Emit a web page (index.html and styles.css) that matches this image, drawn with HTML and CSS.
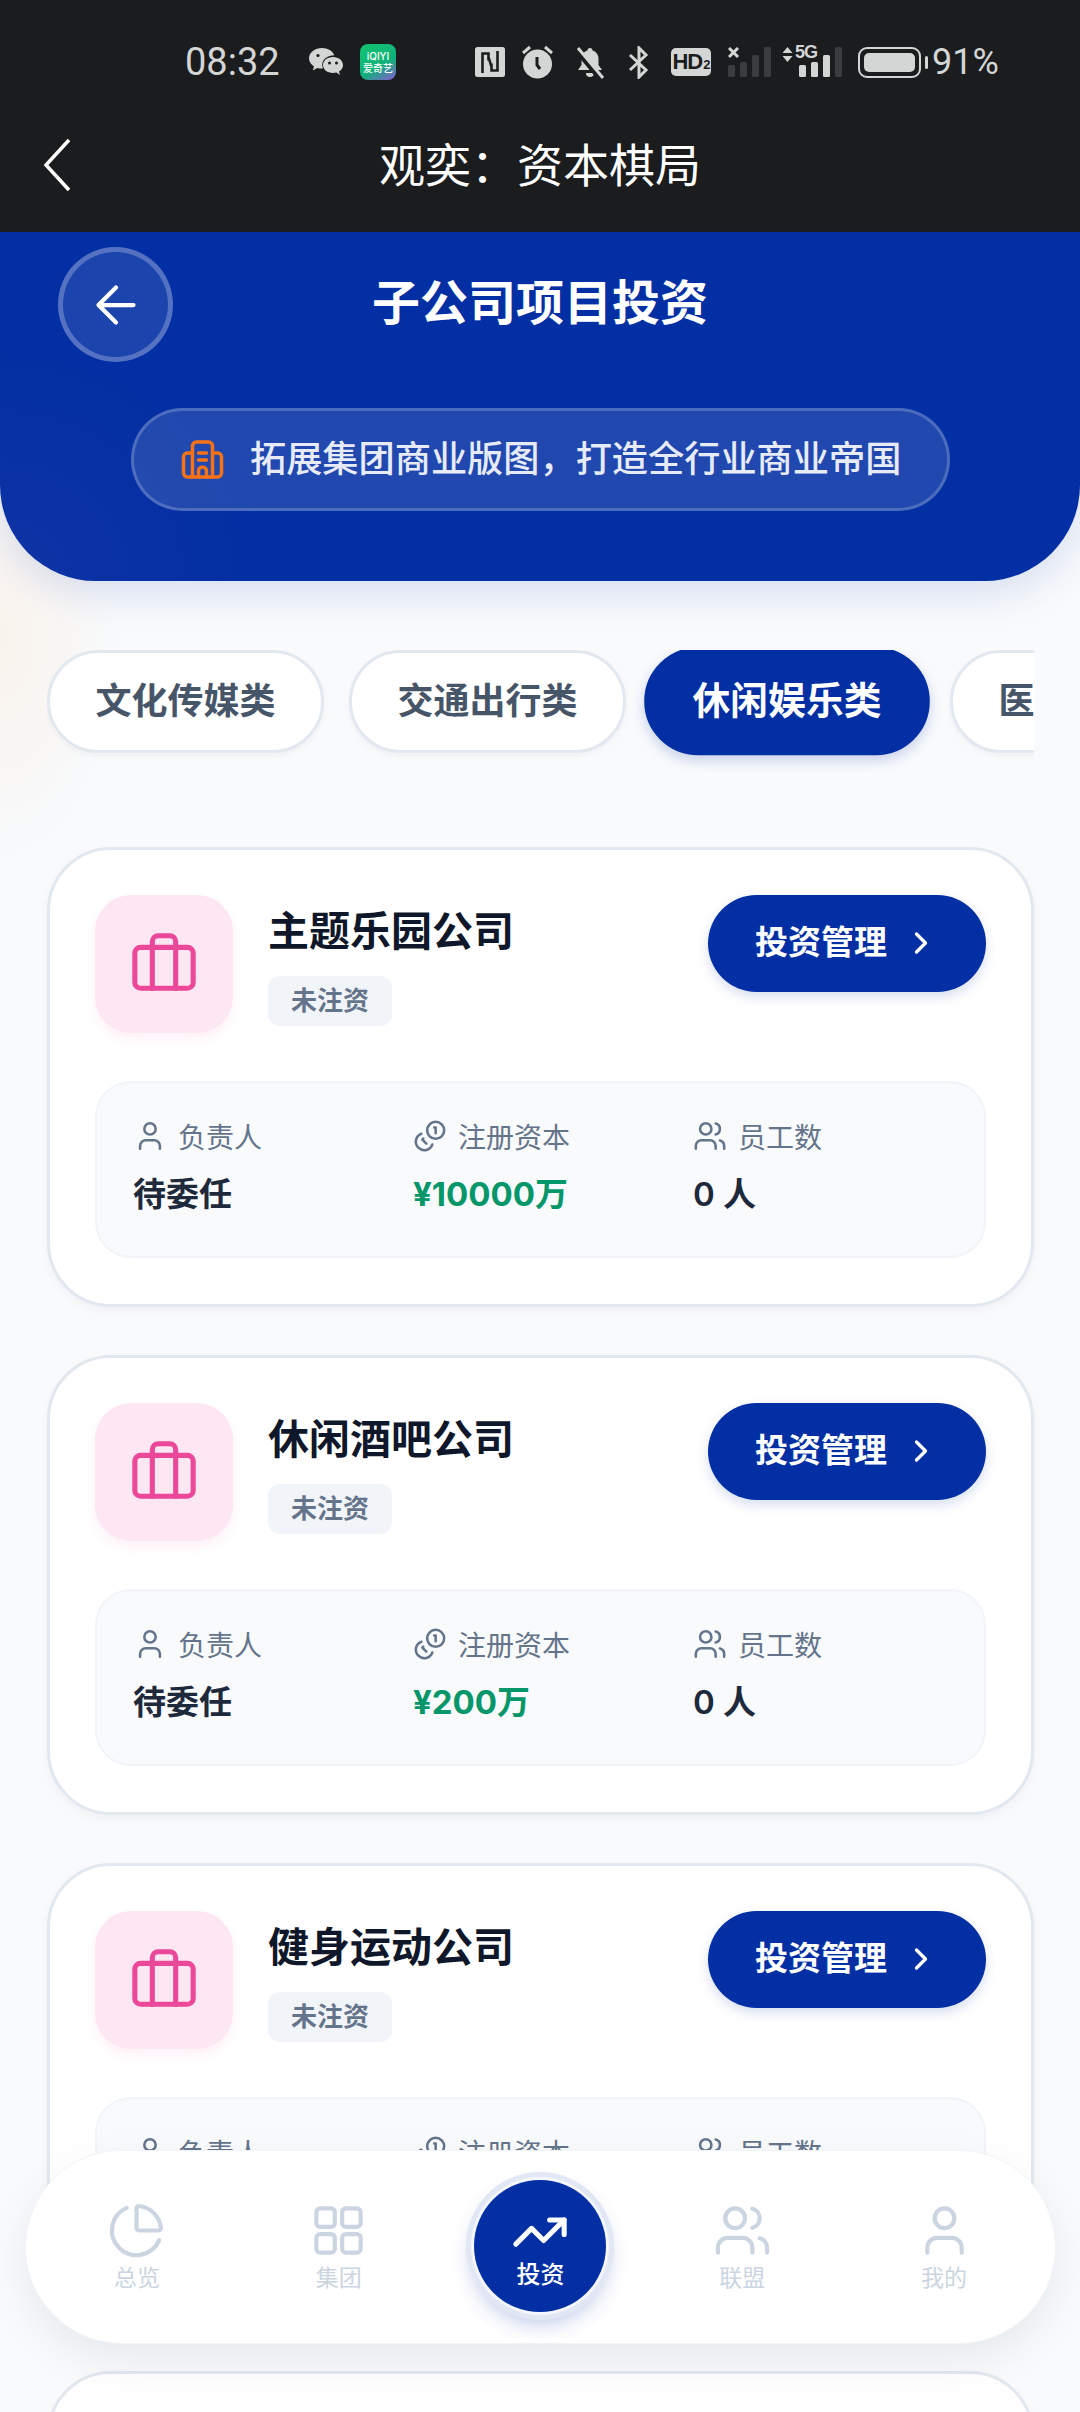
FILE: index.html
```html
<!doctype html>
<html lang="zh-CN">

<head>
    <meta charset="UTF-8">
    <meta name="viewport" content="width=device-width, initial-scale=1.0">
    <link rel="stylesheet" href="styles.css">
    <title>观奕：资本棋局</title>
</head>

<body>
    <div class="phone">
        <div class="system-bar">
            <div class="status-row">
                <span class="clock">08:32</span>
                <svg class="ic-wechat" viewBox="0 0 34 28"><path d="M13 0C6 0 0 4.600 0 10.300c0 3.400 2 6.300 5 8.100l-1.200 4 4.600-2.500c1.400.4 2.900.6 4.600.6l1 0c-.5-1.200-.8-2.400-.8-3.600C13.200 11.500 18.400 7.400 25.300 7.300 23.600 3 18.800 0 13 0z"/><path d="M24 9c-5.600 0-10 3.600-10 8s4.400 8 10 8c1.100 0 2.200-.2 3.300-.5L31 27l-1-3.500c2.500-1.500 4-3.800 4-6.500 0-4.400-4.400-8-10-8z"/><circle cx="9" cy="7.500" r="1.600" fill="#1b1c1e"/><circle cx="20.500" cy="15" r="1.500" fill="#1b1c1e"/><circle cx="27.500" cy="15" r="1.500" fill="#1b1c1e"/></svg>
                <span class="iqiyi"><span>iQIYI</span><span>爱奇艺</span></span>
                <svg class="ic-nfc" viewBox="0 0 30 30"><rect width="30" height="30" rx="2.500"/><path d="M7.500 26V6.500h6v7M22.500 4v19.500h-6v-7M13.500 10l3 10" fill="none" stroke="#1b1c1e" stroke-width="2.600"/></svg>
                <svg class="ic-alarm" viewBox="0 0 31 34"><circle cx="15.500" cy="19" r="14.500"/><path d="M15 12v8l3 4" fill="none" stroke="#1b1c1e" stroke-width="3"/><path d="M1 8l7-6M30 8l-7-6" fill="none" stroke="#d4d5d5" stroke-width="3"/></svg>
                <svg class="ic-bell" viewBox="0 0 30 34"><path d="M15 3a2.500 2.500 0 0 0-2.500 2.500C8.500 6.800 6.500 10 6.500 14v6L3 25h24l-3.500-5v-6c0-4-2-7.200-6-8.500A2.500 2.500 0 0 0 15 3z"/><path d="M11 28h8a4 4 0 0 1-8 0z"/><path d="M1 4l25 30" fill="none" stroke="#1b1c1e" stroke-width="6"/><path d="M3 3l25 30" fill="none" stroke="#d4d5d5" stroke-width="3"/></svg>
                <svg class="ic-bt" viewBox="0 0 22 33"><path d="M2 9l16 15-7 7V2l7 7L2 24" fill="none" stroke="#d4d5d5" stroke-width="3"/></svg>
                <span class="hd">HD<small>2</small></span>
                <svg class="ic-signal" viewBox="0 0 43 30"><path d="M1 1l9 9M10 1l-9 9" fill="none" stroke="#d4d5d5" stroke-width="3"/><rect x="0" y="18" width="7" height="12" rx="1.500" fill="#3b3c3e"/><rect x="12" y="15" width="7" height="15" rx="1.500" fill="#3b3c3e"/><rect x="24" y="8" width="7" height="22" rx="1.500" fill="#3b3c3e"/><rect x="36" y="0" width="7" height="30" rx="1.500" fill="#3b3c3e"/></svg>
                <div class="net">
                    <svg class="ic-updown" viewBox="0 0 11 15"><path d="M5.500 0l5 6H.5zM5.500 15l5-6H.5z"/></svg>
                    <span class="net-5g">5G</span>
                    <svg class="ic-bars" viewBox="0 0 43 30"><rect x="0" y="18" width="7" height="12" rx="1.500" fill="#d4d5d5"/><rect x="12" y="15" width="7" height="15" rx="1.500" fill="#d4d5d5"/><rect x="24" y="8" width="7" height="22" rx="1.500" fill="#d4d5d5"/><rect x="36" y="0" width="7" height="30" rx="1.500" fill="#3b3c3e"/></svg>
                </div>
                <div class="battery"><span class="battery-fill"></span></div>
                <span class="percent">91%</span>
            </div>
            <div class="title-row">
                <svg class="ic-sysback" viewBox="0 0 28 54"><path d="M26 2L3 27l23 25" fill="none" stroke="#fff" stroke-width="3.500"/></svg>
                <span class="app-title">观奕：资本棋局</span>
            </div>
        </div>

        <header class="hero">
            <div class="hero-top">
                <div class="back-btn">
                    <svg viewBox="0 0 24 24"><path d="M12 19l-7-7 7-7M19 12H5"/></svg>
                </div>
                <h1>子公司项目投资</h1>
            </div>
            <div class="slogan">
                <svg viewBox="0 0 42 39"><path d="M11 37V6a4 4 0 0 1 4-4h12a4 4 0 0 1 4 4v31"/><path d="M11 13H6a4 4 0 0 0-4 4v16a4 4 0 0 0 4 4h30a4 4 0 0 0 4-4V17a4 4 0 0 0-4-4h-5"/><path d="M17 13h8M17 20h8M17 37v-6a4 4 0 0 1 8 0v6"/></svg>
                <span>拓展集团商业版图，打造全行业商业帝国</span>
            </div>
        </header>

        <div class="tabs">
            <div class="tab">文化传媒类</div>
            <div class="tab">交通出行类</div>
            <div class="tab active">休闲娱乐类</div>
            <div class="tab">医疗健康类</div>
        </div>

        <div class="cards">
            <div class="card">
                <div class="card-top">
                    <div class="biz-icon"><svg viewBox="0 0 24 24"><rect x="2" y="7" width="20" height="14" rx="2"/><path d="M16 21V5a2 2 0 0 0-2-2h-4a2 2 0 0 0-2 2v16"/></svg></div>
                    <div class="biz-info">
                        <div class="biz-name">主题乐园公司</div>
                        <span class="biz-tag">未注资</span>
                    </div>
                    <div class="manage-btn">投资管理<svg viewBox="0 0 24 24"><path d="M9 18l6-6-6-6"/></svg></div>
                </div>
                <div class="stats">
                    <div class="stat">
                        <div class="stat-label"><svg viewBox="0 0 24 24"><path d="M19 21v-2a4 4 0 0 0-4-4H9a4 4 0 0 0-4 4v2"/><circle cx="12" cy="7" r="4"/></svg>负责人</div>
                        <div class="stat-value">待委任</div>
                    </div>
                    <div class="stat">
                        <div class="stat-label"><svg viewBox="0 0 24 24"><circle cx="16" cy="8" r="6"/><path d="M5.910 10.370A6 6 0 1 0 13.660 18"/><path d="M15 6h1v4"/><path d="M7.290 13.880l-.7.710 2.820 2.820"/></svg>注册资本</div>
                        <div class="stat-value money">¥10000万</div>
                    </div>
                    <div class="stat">
                        <div class="stat-label"><svg viewBox="0 0 24 24"><path d="M16 21v-2a4 4 0 0 0-4-4H6a4 4 0 0 0-4 4v2"/><circle cx="9" cy="7" r="4"/><path d="M22 21v-2a4 4 0 0 0-3-3.870"/><path d="M16 3.130a4 4 0 0 1 0 7.750"/></svg>员工数</div>
                        <div class="stat-value plain">0 人</div>
                    </div>
                </div>
            </div>

            <div class="card">
                <div class="card-top">
                    <div class="biz-icon"><svg viewBox="0 0 24 24"><rect x="2" y="7" width="20" height="14" rx="2"/><path d="M16 21V5a2 2 0 0 0-2-2h-4a2 2 0 0 0-2 2v16"/></svg></div>
                    <div class="biz-info">
                        <div class="biz-name">休闲酒吧公司</div>
                        <span class="biz-tag">未注资</span>
                    </div>
                    <div class="manage-btn">投资管理<svg viewBox="0 0 24 24"><path d="M9 18l6-6-6-6"/></svg></div>
                </div>
                <div class="stats">
                    <div class="stat">
                        <div class="stat-label"><svg viewBox="0 0 24 24"><path d="M19 21v-2a4 4 0 0 0-4-4H9a4 4 0 0 0-4 4v2"/><circle cx="12" cy="7" r="4"/></svg>负责人</div>
                        <div class="stat-value">待委任</div>
                    </div>
                    <div class="stat">
                        <div class="stat-label"><svg viewBox="0 0 24 24"><circle cx="16" cy="8" r="6"/><path d="M5.910 10.370A6 6 0 1 0 13.660 18"/><path d="M15 6h1v4"/><path d="M7.290 13.880l-.7.710 2.820 2.820"/></svg>注册资本</div>
                        <div class="stat-value money">¥200万</div>
                    </div>
                    <div class="stat">
                        <div class="stat-label"><svg viewBox="0 0 24 24"><path d="M16 21v-2a4 4 0 0 0-4-4H6a4 4 0 0 0-4 4v2"/><circle cx="9" cy="7" r="4"/><path d="M22 21v-2a4 4 0 0 0-3-3.870"/><path d="M16 3.130a4 4 0 0 1 0 7.750"/></svg>员工数</div>
                        <div class="stat-value plain">0 人</div>
                    </div>
                </div>
            </div>

            <div class="card">
                <div class="card-top">
                    <div class="biz-icon"><svg viewBox="0 0 24 24"><rect x="2" y="7" width="20" height="14" rx="2"/><path d="M16 21V5a2 2 0 0 0-2-2h-4a2 2 0 0 0-2 2v16"/></svg></div>
                    <div class="biz-info">
                        <div class="biz-name">健身运动公司</div>
                        <span class="biz-tag">未注资</span>
                    </div>
                    <div class="manage-btn">投资管理<svg viewBox="0 0 24 24"><path d="M9 18l6-6-6-6"/></svg></div>
                </div>
                <div class="stats">
                    <div class="stat">
                        <div class="stat-label"><svg viewBox="0 0 24 24"><path d="M19 21v-2a4 4 0 0 0-4-4H9a4 4 0 0 0-4 4v2"/><circle cx="12" cy="7" r="4"/></svg>负责人</div>
                        <div class="stat-value">待委任</div>
                    </div>
                    <div class="stat">
                        <div class="stat-label"><svg viewBox="0 0 24 24"><circle cx="16" cy="8" r="6"/><path d="M5.910 10.370A6 6 0 1 0 13.660 18"/><path d="M15 6h1v4"/><path d="M7.290 13.880l-.7.710 2.820 2.820"/></svg>注册资本</div>
                        <div class="stat-value money">¥500万</div>
                    </div>
                    <div class="stat">
                        <div class="stat-label"><svg viewBox="0 0 24 24"><path d="M16 21v-2a4 4 0 0 0-4-4H6a4 4 0 0 0-4 4v2"/><circle cx="9" cy="7" r="4"/><path d="M22 21v-2a4 4 0 0 0-3-3.870"/><path d="M16 3.130a4 4 0 0 1 0 7.750"/></svg>员工数</div>
                        <div class="stat-value plain">0 人</div>
                    </div>
                </div>
            </div>

            <div class="card"></div>
        </div>

        <nav class="bottom-nav">
            <div class="nav-item">
                <svg viewBox="0 0 24 24"><path d="M21.210 15.890A10 10 0 1 1 8 2.830"/><path d="M21 12c.552 0 1.005-.449.95-.998a10 10 0 0 0-8.953-8.951c-.55-.055-.998.398-.998.95v8a1 1 0 0 0 1 1z"/></svg>
                <span>总览</span>
            </div>
            <div class="nav-item">
                <svg viewBox="0 0 24 24"><rect x="3" y="3" width="7.500" height="7.500" rx="1.500"/><rect x="13.500" y="3" width="7.500" height="7.500" rx="1.500"/><rect x="3" y="13.500" width="7.500" height="7.500" rx="1.500"/><rect x="13.500" y="13.500" width="7.500" height="7.500" rx="1.500"/></svg>
                <span>集团</span>
            </div>
            <div class="nav-item nav-center">
                <div class="nav-circle">
                    <svg viewBox="0 0 24 24"><path d="M22 7l-8.500 8.500-5-5L2 17"/><path d="M16 7h6v6"/></svg>
                    <span>投资</span>
                </div>
            </div>
            <div class="nav-item">
                <svg viewBox="0 0 24 24"><path d="M16 21v-2a4 4 0 0 0-4-4H6a4 4 0 0 0-4 4v2"/><circle cx="9" cy="7" r="4"/><path d="M22 21v-2a4 4 0 0 0-3-3.870"/><path d="M16 3.130a4 4 0 0 1 0 7.750"/></svg>
                <span>联盟</span>
            </div>
            <div class="nav-item">
                <svg viewBox="0 0 24 24"><path d="M19 21v-2a4 4 0 0 0-4-4H9a4 4 0 0 0-4 4v2"/><circle cx="12" cy="7" r="4"/></svg>
                <span>我的</span>
            </div>
        </nav>
    </div>
</body>

</html>
```

FILE: styles.css
```css
* {
    box-sizing: border-box;
}

body {
    margin: 0;
    font-family: Inter, "Noto Sans CJK SC", sans-serif;
}

.phone {
    position: relative;
    width: 1080px;
    height: 2412px;
    overflow: hidden;
    background:
        radial-gradient(ellipse 120px 220px at 0 640px, rgba(253, 226, 200, 0.3), rgba(253, 226, 200, 0)),
        #f8fafc;
}

/* system bar */
.system-bar {
    height: 232px;
    background: #1b1c1e;
    color: #fff;
}

.status-row {
    display: flex;
    align-items: center;
    height: 124px;
    padding-left: 185px;
    color: #d4d5d5;
    fill: #d4d5d5;
}

.clock {
    font-family: Roboto, sans-serif;
    font-size: 38px;
    width: 93px;
    white-space: nowrap;
}

.ic-wechat {
    width: 34px;
    height: 28px;
    margin-left: 31px;
}

.iqiyi {
    display: flex;
    flex-direction: column;
    align-items: center;
    justify-content: center;
    width: 36px;
    height: 36px;
    margin-left: 17px;
    border-radius: 8px;
    background: linear-gradient(150deg, #12c46f 0%, #10b07a 60%, #8a5ad8 100%);
    color: #fff;
    font-size: 10px;
    line-height: 12px;
    font-weight: 500;
    white-space: nowrap;
}

.ic-nfc {
    width: 30px;
    height: 30px;
    margin-left: 79px;
}

.ic-alarm {
    width: 31px;
    height: 34px;
    margin-left: 17px;
}

.ic-bell {
    width: 30px;
    height: 34px;
    margin-left: 22px;
}

.ic-bt {
    width: 22px;
    height: 33px;
    margin-left: 23px;
}

.hd {
    display: flex;
    align-items: baseline;
    justify-content: center;
    width: 40px;
    height: 28px;
    margin-left: 21px;
    border-radius: 5px;
    background: #d4d5d5;
    color: #1b1c1e;
    font-family: "Liberation Sans", sans-serif;
    font-size: 22px;
    line-height: 28px;
    font-weight: 700;
    letter-spacing: -1px;
}

.hd small {
    font-size: 13px;
    margin-left: 1px;
}

.ic-signal {
    width: 43px;
    height: 30px;
    margin-left: 17px;
}

.net {
    position: relative;
    width: 60px;
    height: 30px;
    margin-left: 11px;
}

.ic-updown {
    position: absolute;
    left: 0;
    top: 0;
    width: 11px;
    height: 15px;
}

.net-5g {
    position: absolute;
    left: 13px;
    top: -4px;
    font-family: "Liberation Sans", sans-serif;
    font-size: 18px;
    line-height: 18px;
    font-weight: 700;
    letter-spacing: -1px;
}

.ic-bars {
    position: absolute;
    left: 17px;
    top: 0;
    width: 43px;
    height: 30px;
}

.battery {
    position: relative;
    width: 63px;
    height: 31px;
    margin-left: 16px;
    padding: 4px;
    border: 2px solid #d4d5d5;
    border-radius: 9px;
}

.battery::after {
    content: "";
    position: absolute;
    right: -9px;
    top: 7px;
    width: 3px;
    height: 13px;
    border-radius: 2px;
    background: #d4d5d5;
}

.battery-fill {
    display: block;
    width: 100%;
    height: 100%;
    border-radius: 5px;
    background: #d4d5d5;
}

.percent {
    margin-left: 11px;
    font-family: Roboto, sans-serif;
    font-size: 36px;
}

.title-row {
    position: relative;
    display: flex;
    align-items: center;
    justify-content: center;
    height: 82px;
    padding-bottom: 6px;
}

.ic-sysback {
    position: absolute;
    left: 43px;
    top: 14px;
    width: 28px;
    height: 54px;
}

.app-title {
    font-family: "Noto Sans CJK SC", sans-serif;
    font-size: 46px;
    font-weight: 400;
    line-height: 60px;
}

/* blue header */
.hero {
    height: 349px;
    padding: 15px 58px 0;
    border-radius: 0 0 96px 96px;
    background:
        radial-gradient(ellipse 260px 240px at 0 100%, rgba(40, 60, 170, 0.35), rgba(40, 60, 170, 0)),
        #022fa3;
    box-shadow: 0 12px 40px rgba(2, 47, 163, 0.14);
    color: #fff;
}

.hero-top {
    position: relative;
    display: flex;
    align-items: center;
    justify-content: center;
    height: 115px;
}

.back-btn {
    position: absolute;
    left: 0;
    top: 0;
    display: flex;
    align-items: center;
    justify-content: center;
    width: 115px;
    height: 115px;
    border-radius: 50%;
    border: 5px solid rgba(255, 255, 255, 0.25);
    background: rgba(255, 255, 255, 0.1);
}

.back-btn svg {
    width: 60px;
    height: 60px;
    fill: none;
    stroke: #fff;
    stroke-width: 1.700;
    stroke-linecap: round;
    stroke-linejoin: round;
}

.hero h1 {
    margin: 0 0 11px;
    font-family: "Noto Sans CJK SC", sans-serif;
    font-size: 48px;
    line-height: 60px;
    font-weight: 700;
}

.slogan {
    display: flex;
    align-items: center;
    width: 819px;
    height: 103px;
    margin: 46px 0 0 73px;
    padding-left: 47px;
    border: 3px solid rgba(255, 255, 255, 0.2);
    border-radius: 52px;
    background: rgba(255, 255, 255, 0.12);
}

.slogan svg {
    width: 43px;
    height: 39px;
    margin-right: 26px;
    fill: none;
    stroke: #f97316;
    stroke-width: 3.500;
    stroke-linecap: round;
    stroke-linejoin: round;
}

.slogan span {
    margin-bottom: 8px;
    font-family: "Noto Sans CJK SC", sans-serif;
    font-size: 36.200px;
    font-weight: 500;
    color: #e6ebf7;
    white-space: nowrap;
}

/* category tabs */
.tabs {
    display: flex;
    gap: 25px;
    width: 987px;
    height: 267px;
    margin: 69px 0 0 47px;
    overflow: hidden;
}

.tab {
    flex: none;
    display: flex;
    align-items: center;
    justify-content: center;
    width: 277px;
    height: 103px;
    padding-bottom: 8px;
    border: 3px solid #e2e8f0;
    border-radius: 52px;
    background: #fff;
    box-shadow: 0 3px 6px rgba(15, 23, 42, 0.04);
    color: #475569;
    font-family: "Noto Sans CJK SC", sans-serif;
    font-size: 36px;
    font-weight: 700;
    white-space: nowrap;
}

.tab.active {
    width: 272px;
    margin-right: 2px;
    transform: scale(1.05);
    transform-origin: center 54%;
    border-color: #022fa3;
    background: #022fa3;
    box-shadow: 0 5px 12px rgba(2, 47, 163, 0.2);
    color: #fff;
}

/* company cards */
.cards {
    display: flex;
    flex-direction: column;
    gap: 48px;
    margin-top: -70px;
    padding: 0 46px 0 47px;
}

.card {
    flex: none;
    height: 460px;
    padding: 45px 45px 0;
    border: 3px solid #e2e8f0;
    border-radius: 64px;
    background: #fff;
    box-shadow: 0 4px 10px rgba(15, 23, 42, 0.04);
}

.card-top {
    display: flex;
    align-items: flex-start;
}

.biz-icon {
    display: flex;
    align-items: center;
    justify-content: center;
    width: 138px;
    height: 138px;
    padding-bottom: 4px;
    border-radius: 36px;
    background: #fce7f3;
    box-shadow: 0 6px 12px rgba(236, 72, 153, 0.08);
}

.biz-icon svg {
    width: 70px;
    height: 70px;
    fill: none;
    stroke: #ec4899;
    stroke-width: 1.750;
    stroke-linecap: round;
    stroke-linejoin: round;
}

.biz-info {
    margin-left: 35px;
}

.biz-name {
    margin-top: 4px;
    font-family: "Noto Sans CJK SC", sans-serif;
    font-size: 41px;
    line-height: 58px;
    font-weight: 700;
    color: #0f172a;
}

.biz-tag {
    display: inline-block;
    height: 50px;
    margin-top: 19px;
    padding: 0 23px;
    border-radius: 12px;
    background: #f1f5f9;
    color: #64748b;
    font-family: "Noto Sans CJK SC", sans-serif;
    font-size: 26px;
    line-height: 45px;
    font-weight: 700;
}

.manage-btn {
    display: flex;
    align-items: center;
    justify-content: center;
    width: 278px;
    height: 97px;
    margin-left: auto;
    padding-bottom: 8px;
    border-radius: 49px;
    background: #022fa3;
    box-shadow: 0 5px 12px rgba(2, 47, 163, 0.16);
    color: #fff;
    font-family: "Noto Sans CJK SC", sans-serif;
    font-size: 33px;
    font-weight: 700;
}

.manage-btn svg {
    width: 36px;
    height: 36px;
    margin: 6px 0 0 16px;
    fill: none;
    stroke: #fff;
    stroke-width: 2.200;
    stroke-linecap: round;
    stroke-linejoin: round;
}

.stats {
    display: grid;
    grid-template-columns: 280px 280px 1fr;
    height: 177px;
    margin-top: 48px;
    padding: 33px 36px 0;
    border: 2px solid #f1f5f9;
    border-radius: 36px;
    background: #f8fafc;
}

.stat-label {
    display: flex;
    align-items: center;
    height: 40px;
    color: #64748b;
    font-family: "Noto Sans CJK SC", sans-serif;
    font-size: 28px;
}

.stat-label svg {
    width: 34px;
    height: 34px;
    margin-right: 11px;
    fill: none;
    stroke: #64748b;
    stroke-width: 1.800;
    stroke-linecap: round;
    stroke-linejoin: round;
}

.stat-value {
    margin-top: 15px;
    color: #1e293b;
    font-family: Inter, "Noto Sans CJK SC", sans-serif;
    font-size: 33px;
    line-height: 46px;
    font-weight: 700;
}

.stat-value.money {
    color: #059669;
}

.stat-value.plain {
    font-weight: 600;
}

/* bottom nav */
.bottom-nav {
    position: absolute;
    left: 25px;
    top: 2150px;
    display: flex;
    width: 1031px;
    height: 194px;
    padding: 0 10px;
    border: 1px solid #f1f5f9;
    border-radius: 97px;
    background: #fff;
    box-shadow: 0 16px 44px rgba(15, 23, 42, 0.07);
}

.nav-item {
    flex: 1;
    display: flex;
    flex-direction: column;
    align-items: center;
    padding-top: 50px;
    color: #cbd5e1;
    font-family: "Noto Sans CJK SC", sans-serif;
    font-size: 23px;
    line-height: 32px;
}

.nav-item svg {
    width: 59px;
    height: 59px;
    fill: none;
    stroke: #cbd5e1;
    stroke-width: 1.700;
    stroke-linecap: round;
    stroke-linejoin: round;
}

.nav-center {
    padding-top: 29px;
}

.nav-circle {
    display: flex;
    flex-direction: column;
    align-items: center;
    justify-content: center;
    width: 132px;
    height: 132px;
    border-radius: 50%;
    background: #022fa3;
    box-shadow: 0 0 0 3px #f4f6fb, 0 0 0 8px #e2e7f5, 0 10px 22px rgba(2, 47, 163, 0.3);
    color: #fff;
    font-size: 24px;
    font-weight: 500;
}

.nav-circle svg {
    width: 58px;
    height: 58px;
    margin-bottom: -4px;
    stroke: #fff;
    stroke-width: 2.100;
}
```
